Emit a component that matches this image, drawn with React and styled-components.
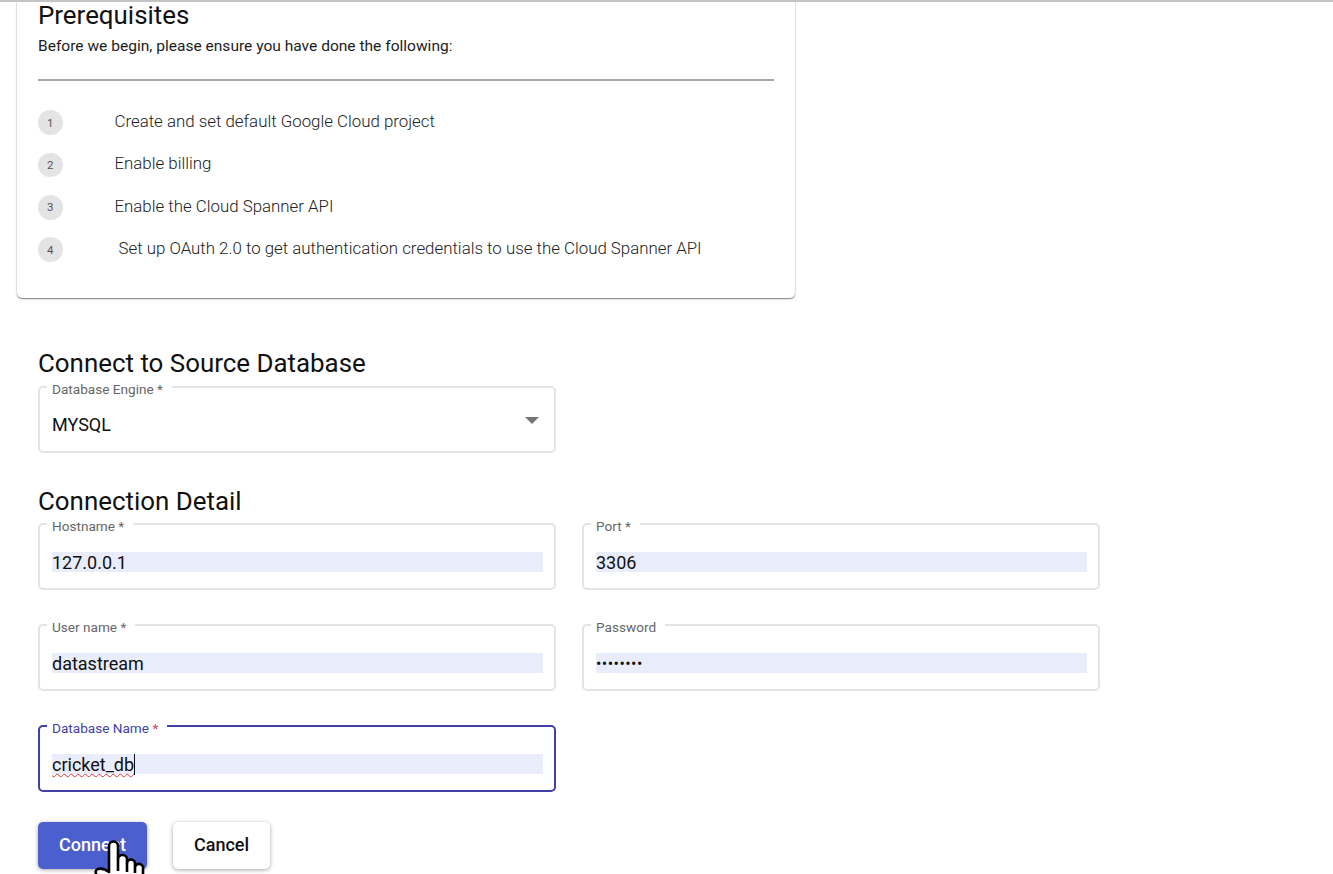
import React from 'react';
import styled, { createGlobalStyle } from 'styled-components';

const Global = createGlobalStyle`
  html, body { margin: 0; padding: 0; background: #fff; overflow: hidden; }
  body { font-family: Roboto, "Liberation Sans", sans-serif; color: #111; }
`;

const Page = styled.div`
  position: relative;
  width: 1333px;
  height: 874px;
  overflow: hidden;
  border-top: 2px solid #c4c4c4;
  box-sizing: border-box;
`;
const Card = styled.section`
  width: 778px;
  height: 297px;
  margin-left: 17px;
  box-sizing: border-box;
  padding: 0 21px;
  border-radius: 0 0 5px 5px;
  background: #fff;
  box-shadow: 0 1px 1.5px rgba(0,0,0,.5), 0 0 2px rgba(0,0,0,.08);
  clip-path: inset(0 -6px -6px -6px);
`;
const CardTitle = styled.h2`
  margin: -1px 0 0;
  font-size: 25.9px;
  font-weight: 400;
  line-height: 28px;
`;
const Intro = styled.p`
  margin: 7px 0 0;
  font-size: 15.55px;
  line-height: 20px;
  color: #1c1c1c;
`;
const Rule = styled.hr`
  margin: 23px 0 0;
  border: 0;
  border-top: 2px solid #a8a8a8;
`;
const Steps = styled.ol`
  list-style: none;
  margin: 28px 0 0;
  padding: 0;
  display: flex;
  flex-direction: column;
  gap: 18px;
`;
const Step = styled.li`
  display: flex;
  align-items: center;
  height: 24.3px;
`;
const StepNumber = styled.span`
  flex: none;
  width: 24.5px;
  height: 24.5px;
  margin-top: 3px;
  border-radius: 50%;
  background: #e4e4e4;
  color: #555;
  font-size: 11.5px;
  display: flex;
  align-items: center;
  justify-content: center;
`;
const StepText = styled.span`
  margin-left: ${p => p.$indent}px;
  font-size: 16.85px;
  font-weight: 300;
  color: #222;
`;
const Content = styled.main`
  margin: 51px 0 0 38px;
  width: 1062px;
`;
const SectionTitle = styled.h2`
  margin: ${p => p.$top || 0}px 0 0;
  font-size: 25.9px;
  font-weight: 400;
  line-height: 28px;
`;
const Engine = styled.div`
  width: 518px;
  margin-top: 3px;
`;
const Grid = styled.div`
  display: grid;
  grid-template-columns: 518px 518px;
  column-gap: 26px;
  row-gap: 28px;
  margin-top: 2px;
`;
const Field = styled.fieldset`
  position: relative;
  box-sizing: border-box;
  height: 73px;
  margin: 0;
  padding: 0 11px 0 12px;
  min-width: 0;
  border: 2px solid ${p => (p.$focused ? '#3f3fa6' : '#e4e4e4')};
  border-radius: 5px;
`;
const Legend = styled.legend`
  position: relative;
  top: 2px;
  margin-left: -5px;
  padding: 0 9px 0 5px;
  font-size: 13.6px;
  line-height: 14px;
  color: ${p => (p.$focused ? '#3f3fa6' : '#666')};
`;
const Star = styled.span`
  color: ${p => (p.$focused ? '#d0405a' : 'inherit')};
`;
const InputBand = styled.div`
  display: flex;
  align-items: center;
  height: 20px;
  margin-top: 21px;
  padding-bottom: ${p => (p.$plain ? 2 : 0)}px;
  box-sizing: border-box;
  background: ${p => (p.$plain ? 'transparent' : '#e9edfb')};
  font-size: 18px;
  color: #111;
  white-space: nowrap;
`;
const Dots = styled.span`
  font-size: 16px;
  letter-spacing: 0.45px;
`;
const Spell = styled.span`
  text-decoration: underline wavy #d33;
  text-decoration-thickness: 1px;
  text-underline-offset: 2px;
  text-decoration-skip-ink: none;
  border-right: 1.5px solid #111;
`;
const Caret = styled.svg`
  position: absolute;
  right: 15px;
  top: 23px;
`;
const Actions = styled.div`
  display: flex;
  gap: 26px;
  margin-top: 30px;
`;
const Button = styled.button`
  flex: none;
  height: 47px;
  width: ${p => p.$w}px;
  padding: 0 0 2px;
  border: 0;
  border-radius: 5px;
  font: 500 18px Roboto, sans-serif;
  background: ${p => (p.$primary ? '#4b5fcf' : '#fff')};
  color: ${p => (p.$primary ? '#fff' : '#111')};
  box-shadow: 0 1px 4px rgba(0,0,0,.35);
`;
const Hand = styled.svg`
  position: absolute;
  left: 90px;
  top: 836px;
`;

const steps = [
  ['1', 'Create and set default Google Cloud project', 52],
  ['2', 'Enable billing', 52],
  ['3', 'Enable the Cloud Spanner API', 52],
  ['4', 'Set up OAuth 2.0 to get authentication credentials to use the Cloud Spanner API', 56],
];

function TextField({ label, required, focused, children }) {
  return (
    <Field $focused={focused}>
      <Legend $focused={focused}>
        {label}{required && <Star $focused={focused}> *</Star>}
      </Legend>
      <InputBand>{children}</InputBand>
    </Field>
  );
}

export default function App() {
  return (
    <Page>
      <Global />
      <Card>
        <CardTitle>Prerequisites</CardTitle>
        <Intro>Before we begin, please ensure you have done the following:</Intro>
        <Rule />
        <Steps>
          {steps.map(([n, t, i]) => (
            <Step key={n}>
              <StepNumber>{n}</StepNumber>
              <StepText $indent={i}>{t}</StepText>
            </Step>
          ))}
        </Steps>
      </Card>
      <Content>
        <SectionTitle>Connect to Source Database</SectionTitle>
        <Engine>
          <Field>
            <Legend>Database Engine<Star> *</Star></Legend>
            <InputBand $plain>MYSQL</InputBand>
            <Caret width="14" height="7" viewBox="0 0 14 7"><path d="M0 0h14L7 7z" fill="#757575" /></Caret>
          </Field>
        </Engine>
        <SectionTitle $top={34}>Connection Detail</SectionTitle>
        <Grid>
          <TextField label="Hostname" required>127.0.0.1</TextField>
          <TextField label="Port" required>3306</TextField>
          <TextField label="User name" required>datastream</TextField>
          <TextField label="Password"><Dots>••••••••</Dots></TextField>
          <TextField label="Database Name" required focused><Spell>cricket_db</Spell></TextField>
        </Grid>
        <Actions>
          <Button $primary $w={109}>Connect</Button>
          <Button $w={97}>Cancel</Button>
        </Actions>
      </Content>
      <Hand width="60" height="38" viewBox="0 0 60 38">
        <path
          d="M19 32V8a4.5 4.5 0 0 1 9 0V21a4.5 4.5 0 0 1 9 1v3a4 4 0 0 1 8 1v3a4 4 0 0 1 8 2V44H14L7 37c-2-2-2-5 1-6 3-1 7 0 11 3z"
          fill="#fff" stroke="#000" strokeWidth="2.6" strokeLinejoin="round"
        />
        <path d="M28 21v12M37 25v9M45 29v6" fill="none" stroke="#000" strokeWidth="2.6" />
      </Hand>
    </Page>
  );
}
